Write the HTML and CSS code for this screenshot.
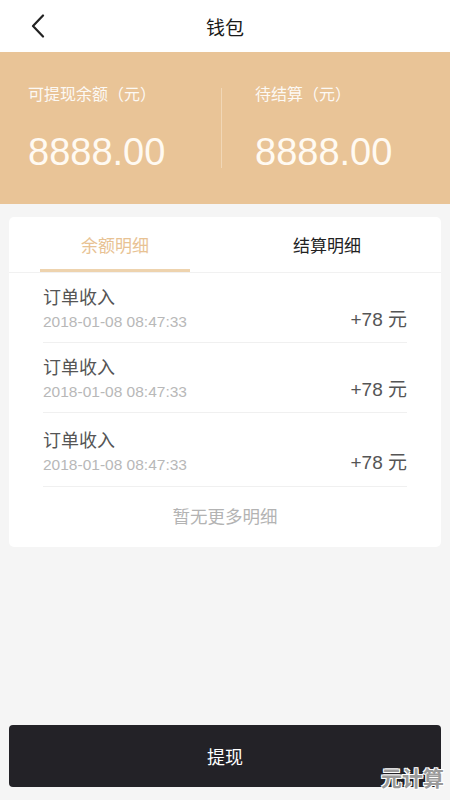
FILE: index.html
```html
<!doctype html>
<html>
<head>
    <meta charset="utf-8">
    <title>钱包</title>
    <link rel="stylesheet" href="styles.css">
</head>

<body>

<div class="page">
    <div class="header">
        <span class="back">
            <svg width="14" height="24" viewBox="0 0 14 24"><path d="M12 1.5 L2 12 L12 22.5" fill="none" stroke="#222" stroke-width="2.2" stroke-linecap="round" stroke-linejoin="round"/></svg>
        </span>
        <div class="title">钱包</div>
    </div>

    <div class="banner">
        <div class="sum sum-left">
            <div class="sum-label">可提现余额（元）</div>
            <div class="sum-value">8888.00</div>
        </div>
        <div class="banner-line"></div>
        <div class="sum sum-right">
            <div class="sum-label">待结算（元）</div>
            <div class="sum-value">8888.00</div>
        </div>
    </div>

    <div class="card">
        <div class="tabs">
            <div class="tab active">余额明细</div>
            <div class="tab">结算明细</div>
        </div>
        <div class="list">
            <div class="item">
                <div class="item-info">
                    <div class="item-name">订单收入</div>
                    <div class="item-time">2018-01-08 08:47:33</div>
                </div>
                <div class="item-money">+78 元</div>
            </div>
            <div class="item">
                <div class="item-info">
                    <div class="item-name">订单收入</div>
                    <div class="item-time">2018-01-08 08:47:33</div>
                </div>
                <div class="item-money">+78 元</div>
            </div>
            <div class="item item-last">
                <div class="item-info">
                    <div class="item-name">订单收入</div>
                    <div class="item-time">2018-01-08 08:47:33</div>
                </div>
                <div class="item-money">+78 元</div>
            </div>
            <div class="no-more">暂无更多明细</div>
        </div>
    </div>

    <div class="btn">提现</div>
    <span class="mark">元计算</span>
</div>

</body>
</html>
```

FILE: styles.css
```css
body {
    margin: 0;
    background: #f5f5f5;
    font-family: "Liberation Sans", "Noto Sans CJK SC", sans-serif;
    color: #222;
}

.page {
    position: relative;
    height: 800px;
    display: flex;
    flex-direction: column;
}

.header {
    height: 52px;
    background: #fff;
    display: flex;
    align-items: center;
    justify-content: center;
    position: relative;
}

.back {
    position: absolute;
    left: 31px;
    top: 14px;
}

.title {
    font-size: 19px;
    color: #1a1a1a;
}

.banner {
    height: 152px;
    background: #e9c497;
    display: flex;
    align-items: flex-start;
}

.sum {
    padding-top: 31px;
    color: #fff;
}

.sum-left {
    width: 193px;
    padding-left: 28px;
}

.sum-right {
    flex: 1;
    padding-left: 33px;
}

.banner-line {
    width: 1px;
    height: 80px;
    margin-top: 36px;
    background: #f1d7b6;
}

.sum-label {
    font-size: 16px;
    line-height: 24px;
    opacity: 0.9;
}

.sum-value {
    margin-top: 23px;
    font-size: 38px;
    line-height: 44px;
    color: #fffaf2;
}

.card {
    margin: 13px 9px 0;
    background: #fff;
    border-radius: 5px;
}

.tabs {
    display: flex;
    height: 55px;
    border-bottom: 1px solid #f1f1f1;
}

.tab {
    width: 212px;
    display: flex;
    align-items: center;
    justify-content: center;
    font-size: 17px;
    color: #222;
    position: relative;
}

.tab.active {
    color: #e8c293;
}

.tab.active:after {
    content: "";
    position: absolute;
    left: 31px;
    right: 31px;
    bottom: 0;
    height: 3px;
    background: #eed3ae;
}

.list {
    padding: 0 34px 0 34px;
}

.item {
    height: 70px;
    padding-top: 13px;
    box-sizing: border-box;
    border-bottom: 1px solid #f0f0f0;
    display: flex;
    justify-content: space-between;
}

.item-last {
    height: 74px;
    padding-top: 16px;
}

.item-name {
    font-size: 18px;
    line-height: 24px;
    color: #555;
}

.item-time {
    font-size: 15.5px;
    line-height: 24px;
    color: #b8b8b8;
}

.item-money {
    padding-top: 22px;
    font-size: 19px;
    line-height: 24px;
    color: #555;
}

.no-more {
    padding: 18px 0;
    text-align: center;
    font-size: 17.5px;
    line-height: 24px;
    color: #b3b3b3;
}

.btn {
    margin: auto 9px 13px;
    height: 62px;
    background: #232227;
    border-radius: 4px;
    color: #fff;
    font-size: 18px;
    display: flex;
    align-items: center;
    justify-content: center;
}

.mark {
    position: absolute;
    right: 6px;
    bottom: 8px;
    font-size: 21px;
    font-weight: bold;
    color: #9a9a9a;
    text-shadow: 1px 1px 0 #fff, -1px -1px 0 #fff, 1px -1px 0 #fff, -1px 1px 0 #fff;
}
```
